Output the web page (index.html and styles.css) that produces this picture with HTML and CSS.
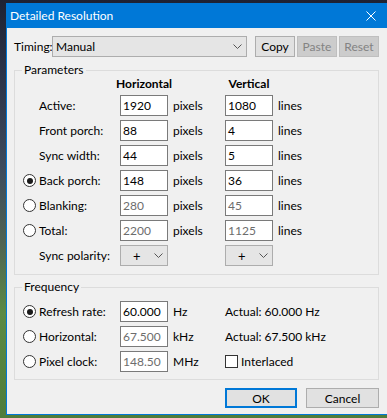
FILE: index.html
```html
<!DOCTYPE html>
<html>
<head>
<meta charset="utf-8">
<link rel="stylesheet" href="styles.css">
</head>
<body>
<div class="window">
  <div class="titlebar">
    <span class="title">Detailed Resolution</span>
    <svg class="close" width="10" height="10" viewBox="0 0 10 10"><path d="M0.5 0.5 L9.5 9.5 M9.5 0.5 L0.5 9.5" stroke="#fff" stroke-width="1" fill="none"/></svg>
  </div>
  <div class="client">
    <div class="timing-row">
      <span class="timing-label">Timing:</span>
      <div class="combo combo-wide"><span>Manual</span><svg class="chev" width="9" height="5" viewBox="0 0 9 5"><path d="M0.5 0.5 L4.5 4.5 L8.5 0.5" stroke="#555" fill="none"/></svg></div>
      <div class="btn">Copy</div>
      <div class="btn btn-disabled">Paste</div>
      <div class="btn btn-disabled">Reset</div>
    </div>

    <fieldset class="group group-params">
      <legend>Parameters</legend>
      <div class="grid params-grid">
        <span></span><span></span>
        <div class="head">Horizontal</div><span></span>
        <div class="head">Vertical</div><span></span>

        <span></span><span class="lbl">Active:</span>
        <div class="field">1920</div><span class="unit">pixels</span>
        <div class="field">1080</div><span class="unit">lines</span>

        <span></span><span class="lbl">Front porch:</span>
        <div class="field">88</div><span class="unit">pixels</span>
        <div class="field">4</div><span class="unit">lines</span>

        <span></span><span class="lbl">Sync width:</span>
        <div class="field">44</div><span class="unit">pixels</span>
        <div class="field">5</div><span class="unit">lines</span>

        <span class="radio checked"></span><span class="lbl">Back porch:</span>
        <div class="field">148</div><span class="unit">pixels</span>
        <div class="field">36</div><span class="unit">lines</span>

        <span class="radio"></span><span class="lbl">Blanking:</span>
        <div class="field field-disabled">280</div><span class="unit">pixels</span>
        <div class="field field-disabled">45</div><span class="unit">lines</span>

        <span class="radio"></span><span class="lbl">Total:</span>
        <div class="field field-disabled">2200</div><span class="unit">pixels</span>
        <div class="field field-disabled">1125</div><span class="unit">lines</span>

        <span></span><span class="lbl">Sync polarity:</span>
        <div class="combo combo-small"><span>+</span><svg class="chev" width="9" height="5" viewBox="0 0 9 5"><path d="M0.5 0.5 L4.5 4.5 L8.5 0.5" stroke="#555" fill="none"/></svg></div><span></span>
        <div class="combo combo-small"><span>+</span><svg class="chev" width="9" height="5" viewBox="0 0 9 5"><path d="M0.5 0.5 L4.5 4.5 L8.5 0.5" stroke="#555" fill="none"/></svg></div><span></span>
      </div>
    </fieldset>

    <fieldset class="group group-freq">
      <legend>Frequency</legend>
      <div class="grid freq-grid">
        <span class="radio checked"></span><span class="lbl">Refresh rate:</span>
        <div class="field">60.000</div><span class="unit">Hz</span>
        <span class="actual">Actual: 60.000 Hz</span>

        <span class="radio"></span><span class="lbl">Horizontal:</span>
        <div class="field field-disabled">67.500</div><span class="unit">kHz</span>
        <span class="actual">Actual: 67.500 kHz</span>

        <span class="radio"></span><span class="lbl">Pixel clock:</span>
        <div class="field field-disabled">148.50</div><span class="unit">MHz</span>
        <span class="check-wrap"><span class="checkbox"></span><span>Interlaced</span></span>
      </div>
    </fieldset>

    <div class="button-row">
      <div class="btn btn-default">OK</div>
      <div class="btn btn-cancel">Cancel</div>
    </div>
  </div>
</div>
</body>
</html>
```

FILE: styles.css
```css
* { box-sizing: border-box; }
html, body { margin: 0; padding: 0; }
body {
  width: 387px;
  height: 418px;
  overflow: hidden;
  background: linear-gradient(180deg, #1e2233 0%, #2c3348 18%, #3d4a5c 40%, #4f6352 58%, #5b8a44 75%, #4e7c3a 100%);
  font-family: "Segoe UI", Lato, "Liberation Sans", sans-serif;
  font-size: 12px;
  color: #000;
}
.window {
  margin: 3px 0 0 6px;
  width: 382px;
  height: 412px;
  border: 1px solid #0078d7;
  border-top: 0;
  background: #f0f0f0;
  display: flex;
  flex-direction: column;
}
.titlebar {
  height: 25px;
  flex: none;
  background: #0078d7;
  color: #fff;
  display: flex;
  align-items: center;
  justify-content: space-between;
  padding: 0 11px 0 3px;
}
.title { font-size: 12px; line-height: 16px; }
.close { display: block; }
.client {
  flex: 1;
  padding: 8px 8px 6px 7px;
  display: flex;
  flex-direction: column;
}
.timing-row {
  display: flex;
  align-items: stretch;
  height: 21px;
}
.timing-label {
  width: 38px;
  display: flex;
  align-items: center;
}
.combo {
  display: flex;
  align-items: center;
  justify-content: space-between;
  border: 1px solid #adadad;
  background: #e5e5e5;
}
.combo-wide {
  width: 195px;
  margin-right: 8px;
  padding: 0 4px 0 3px;
}
.combo-small {
  width: 48px;
  height: 21px;
  padding: 0 4px 0 12px;
  font-size: 13px;
}
.chev { display: block; }
.btn {
  width: 40px;
  display: flex;
  align-items: center;
  justify-content: center;
  border: 1px solid #adadad;
  background: #e1e1e1;
  margin-right: 2px;
}
.btn:last-child { margin-right: 0; }
.btn-disabled {
  background: #cccccc;
  border-color: #bfbfbf;
  color: #838383;
}
.group {
  margin: 0;
  border: 1px solid #dcdcdc;
  padding: 0 0 8px 8px;
}
.group legend {
  padding: 0 2px;
  margin-left: -1px;
  line-height: 14px;
}
.group-params { margin-top: 6px; }
.group-freq { margin-top: 5px; padding-top: 7px; padding-bottom: 7px; }
.grid {
  display: grid;
  align-items: center;
  row-gap: 4px;
}
.params-grid {
  grid-template-columns: 16px 81px 48px 57px 48px auto;
  grid-template-rows: 14px;
  grid-auto-rows: 21px;
}
.freq-grid {
  grid-template-columns: 16px 81px 48px 57px auto;
  grid-auto-rows: 21px;
}
.head {
  font-weight: bold;
  display: flex;
  justify-content: center;
  white-space: nowrap;
  line-height: 14px;
}
.lbl { white-space: nowrap; }
.unit { padding-left: 5px; white-space: nowrap; }
.field {
  height: 21px;
  border: 1px solid #7a7a7a;
  background: #fff;
  padding-left: 2px;
  display: flex;
  align-items: center;
}
.field-disabled { color: #6d6d6d; }
.radio {
  width: 13px;
  height: 13px;
  border: 1px solid #333;
  border-radius: 50%;
  background: #fff;
  display: flex;
  align-items: center;
  justify-content: center;
}
.radio.checked::after {
  content: "";
  width: 6px;
  height: 6px;
  border-radius: 50%;
  background: #1a1a1a;
}
.actual { white-space: nowrap; }
.check-wrap {
  display: flex;
  align-items: center;
  gap: 3px;
}
.checkbox {
  width: 13px;
  height: 13px;
  border: 1px solid #333;
  background: #fff;
}
.button-row {
  margin-top: auto;
  display: flex;
  justify-content: flex-end;
  gap: 9px;
  height: 20px;
}
.button-row .btn { margin-right: 0; }
.btn-default {
  width: 72px;
  border: 2px solid #0078d7;
}
.btn-cancel { width: 73px; }
```
